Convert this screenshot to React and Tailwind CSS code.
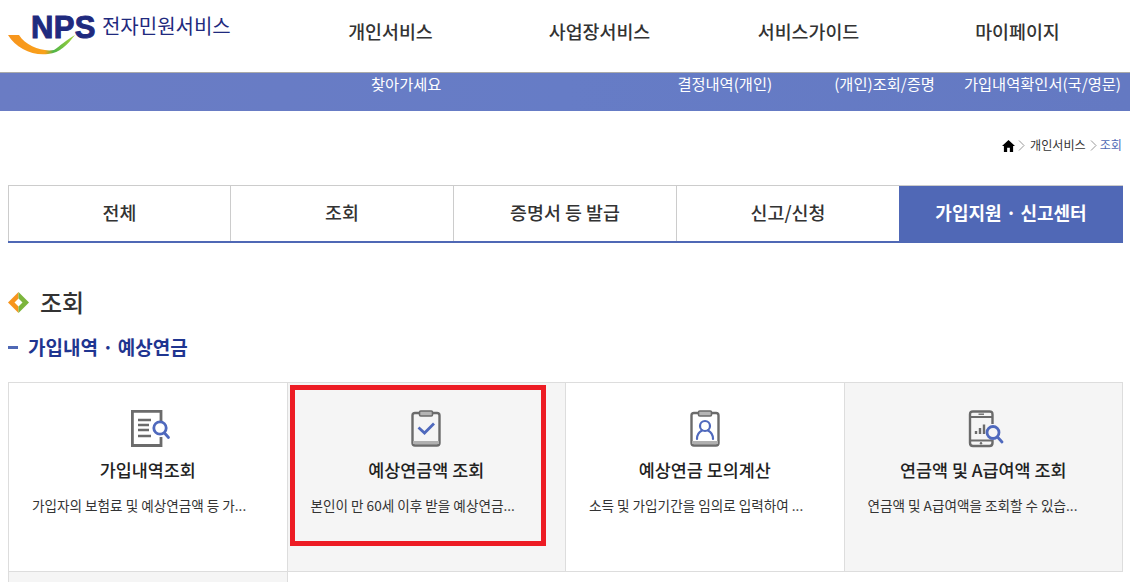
import React from 'react'

const FONT = "font-['Noto_Sans_CJK_KR','Noto_Sans',sans-serif]"

const NAV = ['개인서비스', '사업장서비스', '서비스가이드', '마이페이지']
const TABS = ['전체', '조회', '증명서 등 발급', '신고/신청', '가입지원 · 신고센터']

const LogoSwoosh = () => (
  <svg width="68" height="26" viewBox="0 0 68 26" className="absolute left-0 top-[34px]">
    <defs>
      <linearGradient id="swoosh" x1="0" x2="1" y1="0" y2="0">
        <stop offset="0" stopColor="#f7941d" />
        <stop offset="0.55" stopColor="#f9a11b" />
        <stop offset="0.68" stopColor="#4fb548" />
        <stop offset="1" stopColor="#a6d13a" />
      </linearGradient>
    </defs>
    <path d="M0 1 L11 1 C18 12 34 18 46 16 C52 12 58 6 67 1 C60 10 52 19 40 20 C24 22 8 14 0 1 Z" fill="url(#swoosh)" />
  </svg>
)

const IconDoc = () => (
  <svg width="40" height="38" viewBox="0 0 40 38" fill="none" className="ml-[6px]">
    <path d="M30 11 V1.4 H1.4 V35.5 H30 V27" stroke="#6b6b6b" strokeWidth="2.8" />
    <path d="M7 10 H20 M7 15 H18 M7 20 H18 M7 26 H20" stroke="#6b6b6b" strokeWidth="2.4" />
    <circle cx="29" cy="18" r="6.2" stroke="#4f69bd" strokeWidth="2.8" />
    <path d="M33.5 23 L37.5 27.5" stroke="#4f69bd" strokeWidth="2.8" strokeLinecap="round" />
  </svg>
)

const IconBoard = ({ children }) => (
  <svg width="30" height="38" viewBox="0 0 30 38" fill="none">
    <path d="M9 3 H4 Q1.5 3 1.5 5.5 V33 Q1.5 35.5 4 35.5 H26 Q28.5 35.5 28.5 33 V5.5 Q28.5 3 26 3 H21" stroke="#6b6b6b" strokeWidth="2.4" />
    <rect x="8.5" y="1" width="13" height="5" rx="1.2" fill="#b5b5b5" stroke="#6b6b6b" strokeWidth="1.6" />
    <rect x="2" y="31" width="26" height="3" fill="#b0b0b0" />
    {children}
  </svg>
)

const IconCheck = () => (
  <IconBoard>
    <path d="M7.5 17.5 L13.5 23 L23 13.5" stroke="#4f69bd" strokeWidth="2.8" />
  </IconBoard>
)

const IconPerson = () => (
  <IconBoard>
    <circle cx="15" cy="16" r="5" stroke="#4f69bd" strokeWidth="2.2" />
    <path d="M7 29 C7 24 10 21.5 12 20.5 M23 29 C23 24 20 21.5 18 20.5" stroke="#4f69bd" strokeWidth="2.2" strokeLinecap="round" />
  </IconBoard>
)

const IconPhone = () => (
  <svg width="36" height="38" viewBox="0 0 36 38" fill="none" className="ml-[5px]">
    <path d="M24.5 14 V4.5 Q24.5 1.5 21.5 1.5 H5 Q2 1.5 2 4.5 V33 Q2 36 5 36 H21.5 Q24.5 36 24.5 33 V30" stroke="#6b6b6b" strokeWidth="2.4" />
    <path d="M2 7 H24 M2 30.5 H24" stroke="#6b6b6b" strokeWidth="1.8" />
    <path d="M10.5 4.2 H16" stroke="#6b6b6b" strokeWidth="1.4" />
    <circle cx="13" cy="33.2" r="1.2" fill="#6b6b6b" />
    <path d="M8 24 V21 M12 24 V18 M16 24 V14.5" stroke="#6b6b6b" strokeWidth="2.4" />
    <circle cx="25" cy="22.5" r="6" stroke="#4f69bd" strokeWidth="2.8" />
    <path d="M29.5 27 L34 32" stroke="#4f69bd" strokeWidth="2.8" strokeLinecap="round" />
  </svg>
)

const Chevron = () => (
  <svg width="7" height="11" viewBox="0 0 7 11" fill="none" className="mt-[4px]">
    <path d="M1 0.5 L6 5.5 L1 10.5" stroke="#999" strokeWidth="1" />
  </svg>
)

const CARDS = [
  { icon: IconDoc, title: '가입내역조회', desc: '가입자의 보험료 및 예상연금액 등 가...', bg: 'bg-white' },
  { icon: IconCheck, title: '예상연금액 조회', desc: '본인이 만 60세 이후 받을 예상연금...', bg: 'bg-[#f5f5f5]' },
  { icon: IconPerson, title: '예상연금 모의계산', desc: '소득 및 가입기간을 임의로 입력하여 ...', bg: 'bg-white' },
  { icon: IconPhone, title: '연금액 및 A급여액 조회', desc: '연금액 및 A급여액을 조회할 수 있습...', bg: 'bg-[#f5f5f5]' },
]

export default function App() {
  return (
    <div className={`relative h-[582px] w-[1130px] overflow-hidden bg-white ${FONT} text-[#222]`}>
      {/* Header */}
      <header className="flex h-[73px] border-b border-[#aaaaaa] pl-2 pr-2">
        <div className="relative flex h-[72px] w-[278px] items-start">
          <LogoSwoosh />
          <span className="ml-[23px] mt-[10px] font-['Liberation_Sans',sans-serif] text-[31px] font-bold leading-[36px] tracking-[0.4px] text-[#1f2a7e] [-webkit-text-stroke:1px_#1f2a7e]">NPS</span>
          <span className="ml-[6px] mt-[11px] text-[20px] leading-[30px] text-[#1f2a7e]">전자민원서비스</span>
        </div>
        <nav className="grid flex-1 grid-cols-4">
          {NAV.map((item) => (
            <a key={item} className="flex h-[64px] items-center justify-center text-[18.4px] font-medium text-[#333]">{item}</a>
          ))}
        </nav>
      </header>

      {/* Sub menu band */}
      <div className="flex h-[38px] items-start bg-gradient-to-r from-[#6a7cc4] via-[#667cc6] to-[#6479c2] text-[15.3px] leading-[20px] text-white">
        <span className="ml-[371px]">찾아가세요</span>
        <span className="ml-[236px]">결정내역(개인)</span>
        <span className="ml-[62px]">(개인)조회/증명</span>
        <span className="ml-[29px]">가입내역확인서(국/영문)</span>
      </div>

      {/* Breadcrumb */}
      <div className="flex h-[74px] items-start justify-end pr-2 pt-[25px] text-[12.1px] leading-[18px] text-[#333]">
        <svg width="13" height="12" viewBox="0 0 24 22" className="mr-[3px] mt-[4px]">
          <path d="M12 0 L24 11 H20.5 V22 H14.5 V14 H9.5 V22 H3.5 V11 H0 Z" fill="#000" />
        </svg>
        <Chevron />
        <span className="ml-[5px]">개인서비스</span>
        <span className="ml-[4px] mr-[3px] flex"><Chevron /></span>
        <span className="text-[#4f68b5]">조회</span>
      </div>

      {/* Tabs */}
      <div className="ml-2 grid h-[58px] w-[1115px] grid-cols-[222px_223px_223px_223px_1fr] border-b-2 border-t border-b-[#4f68b5] border-t-[#cccccc]">
        {TABS.map((tab, i) => (
          <div
            key={tab}
            className={i === 4
              ? 'flex items-center justify-center bg-[#5068b6] pb-[2px] text-[18px] font-bold text-white'
              : 'flex items-center justify-center border-l border-[#cccccc] pb-[2px] text-[18.4px] font-medium text-[#333]'}
          >
            {tab}
          </div>
        ))}
      </div>

      {/* Section titles */}
      <div className="mx-2 mt-[40px] flex h-[38px] items-center">
        <svg width="21" height="21" viewBox="0 0 21 21" className="shrink-0">
          <path d="M10.5 0 L0 10.5 L10.5 21 Z" fill="#f7941d" />
          <path d="M10.5 0 L21 10.5 L10.5 21 Z" fill="#7cb53c" />
          <path d="M10.5 6.5 L6.5 10.5 L10.5 14.5 L14.5 10.5 Z" fill="#fff" />
        </svg>
        <h1 className="ml-[11px] text-[24px] font-medium text-[#333]">조회</h1>
      </div>
      <div className="mx-2 mt-[10px] flex h-[32px] items-center">
        <span className="h-[3px] w-[10px] bg-[#4f68b5]" />
        <h2 className="ml-[10px] text-[19px] font-bold text-[#1f3590]">가입내역 · 예상연금</h2>
      </div>

      {/* Cards */}
      <div className="ml-2 mt-[19px] grid w-[1115px] grid-cols-4 border-l border-t border-[#dddddd]">
        {CARDS.map((card) => (
          <div key={card.title} className={`flex h-[189px] flex-col items-center border-b border-r border-[#dddddd] pt-[27px] ${card.bg}`}>
            <div className="flex h-[38px] items-center justify-center"><card.icon /></div>
            <div className="mt-[9px] text-[17.4px] font-medium leading-[26px] text-[#222]">{card.title}</div>
            <div className="mt-[12px] w-full pl-[23px] text-[13.6px] leading-[20px] text-[#333]">{card.desc}</div>
          </div>
        ))}
        <div className="h-[40px] border-r border-[#dddddd] bg-[#f5f5f5]" />
      </div>

      {/* Red highlight */}
      <div className="absolute left-[290px] top-[385px] h-[161px] w-[256px] border-[5px] border-[#ed1c24]" />
    </div>
  )
}
